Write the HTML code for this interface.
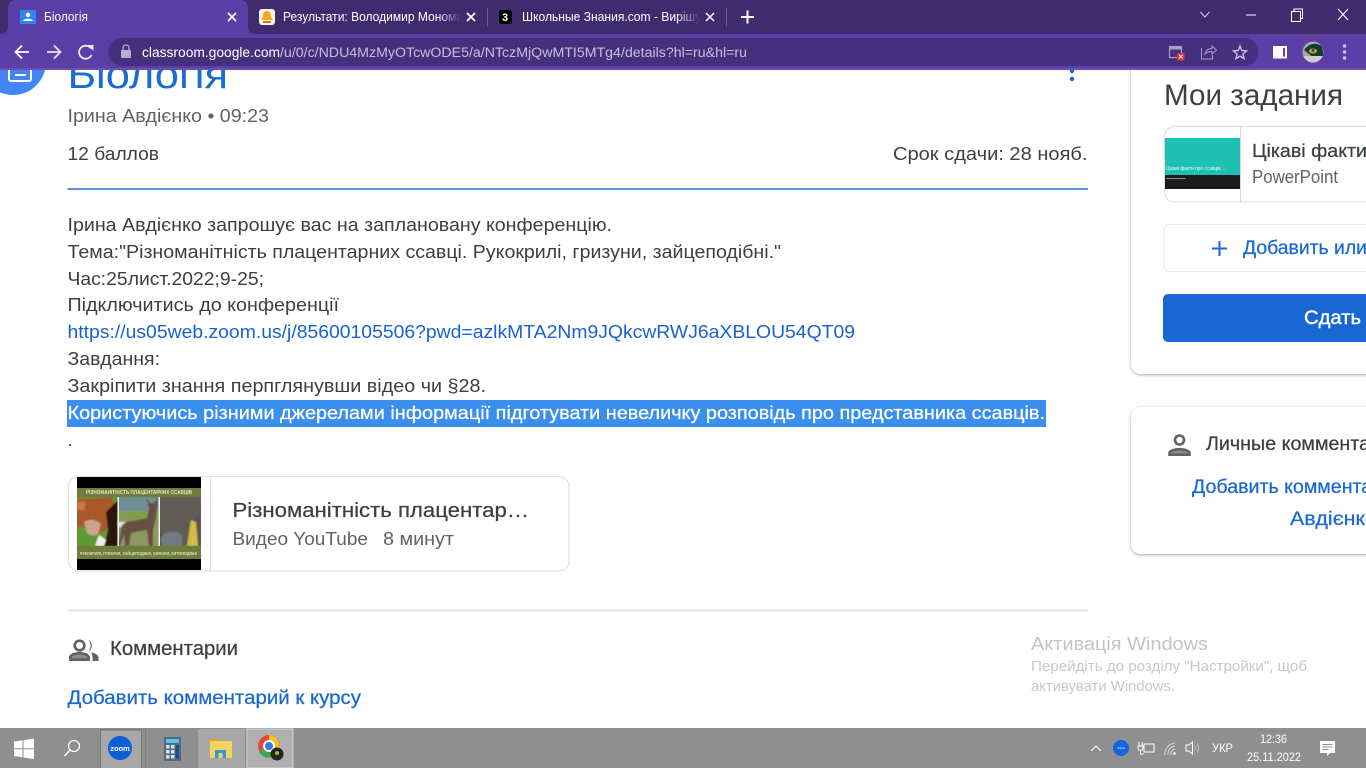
<!DOCTYPE html>
<html lang="uk"><head><meta charset="utf-8"><title>Біологія</title>
<style>
html,body{margin:0;padding:0;background:#fff;overflow:hidden;width:1366px;height:768px}
svg{display:block}
text{font-family:"Liberation Sans","Noto Sans CJK JP",sans-serif;white-space:pre}
.b{font-size:18px;fill:#3c4043}
.g{font-size:18px;fill:#5f6368}
.m{stroke-width:.25;paint-order:stroke}
</style></head><body>
<svg width="1366" height="768" viewBox="0 0 1366 768" xmlns="http://www.w3.org/2000/svg">
<defs>
<linearGradient id="f1" x1="0" x2="1"><stop offset="0" stop-color="#3e2c6e" stop-opacity="0"/><stop offset="1" stop-color="#3e2c6e"/></linearGradient>
<filter id="sh" x="-10%" y="-10%" width="120%" height="125%"><feDropShadow dx="0" dy="1" stdDeviation="1.500" flood-color="#000" flood-opacity=".35"/></filter>
<filter id="soft" x="-5%" y="-5%" width="110%" height="110%"><feGaussianBlur stdDeviation=".7"/></filter>
<clipPath id="thumb"><rect x="77" y="477" width="124" height="93"/></clipPath>
<clipPath id="pics"><rect x="77" y="497" width="124" height="49"/></clipPath>
<clipPath id="avatar"><circle cx="1313" cy="52" r="10.500"/></clipPath>
</defs>
<rect width="1366" height="768" fill="#fff"/>

<!-- page top heading, under toolbar -->
<circle cx="13" cy="62" r="33" fill="#4285f4"/>
<rect x="9" y="62" width="22" height="19" rx="2" fill="none" stroke="#fff" stroke-width="2"/>
<rect x="15" y="74" width="11" height="2" fill="#fff"/>
<text x="67.500" y="88" font-size="39" fill="#1a6ccf" textLength="160.500" lengthAdjust="spacingAndGlyphs">Біологія</text>
<circle cx="1072" cy="71" r="2.200" fill="#1967d2"/><circle cx="1072" cy="79" r="2.200" fill="#1967d2"/>

<text class="g" x="67.500" y="122" textLength="201.500" lengthAdjust="spacingAndGlyphs">Ірина Авдієнко • 09:23</text>
<text class="b" x="67.500" y="160" textLength="91.500" lengthAdjust="spacingAndGlyphs">12 баллов</text>
<text class="b" x="893" y="160" textLength="194.500" lengthAdjust="spacingAndGlyphs">Срок сдачи: 28 нояб.</text>
<rect x="67.500" y="188" width="1020.500" height="2" fill="#5c94d6"/>

<text class="b" x="67.500" y="231" textLength="544.500" lengthAdjust="spacingAndGlyphs">Ірина Авдієнко запрошує вас на заплановану конференцію.</text>
<text class="b" x="67.500" y="258" textLength="713.500" lengthAdjust="spacingAndGlyphs">Тема:"Різноманітність плацентарних ссавці. Рукокрилі, гризуни, зайцеподібні."</text>
<text class="b" x="67.500" y="285" textLength="196.500" lengthAdjust="spacingAndGlyphs">Час:25лист.2022;9-25;</text>
<text class="b" x="67.500" y="311" textLength="271.500" lengthAdjust="spacingAndGlyphs">Підключитись до конференції</text>
<text x="67.500" y="338" font-size="18" fill="#1a62d0" textLength="787.500" lengthAdjust="spacingAndGlyphs">https://us05web.zoom.us/j/85600105506?pwd=azlkMTA2Nm9JQkcwRWJ6aXBLOU54QT09</text>
<text class="b" x="67.500" y="365" textLength="92.500" lengthAdjust="spacingAndGlyphs">Завдання:</text>
<text class="b" x="67.500" y="392" textLength="418.500" lengthAdjust="spacingAndGlyphs">Закріпити знання перпглянувши відео чи §28.</text>
<rect x="67" y="400" width="979" height="27" fill="#3a8fec"/>
<text x="67.500" y="419" font-size="18" fill="#fff" stroke="#fff" class="m" textLength="977.500" lengthAdjust="spacingAndGlyphs">Користуючись різними джерелами інформації підготувати невеличку розповідь про представника ссавців.</text>
<text class="b" x="67.500" y="446">.</text>

<!-- video attachment -->
<rect x="68.500" y="476.500" width="500.500" height="94.500" rx="10" fill="#fff" stroke="#dadce0"/>
<g clip-path="url(#thumb)">
<rect x="77" y="477" width="124" height="93" fill="#000"/>
<rect x="77" y="488" width="124" height="71" fill="#6f7d3c"/>
<g clip-path="url(#pics)"><g filter="url(#soft)">
<rect x="77" y="497" width="41" height="49" fill="#5f9a35"/>
<path d="M77 499 L112 497 L116 510 L112 524 L104 532 L98 534 L88 532 L84 526 L77 528Z" fill="#a9592a"/>
<path d="M84 522 Q93 517 101 524 L98 534 Q92 537 87 533Z" fill="#c9a58c"/>
<path d="M77 502 h8 v8 h-8Z" fill="#c97a3e"/>
<path d="M106 512 L118 500 L118 546 L104 546 L108 530Z" fill="#2a130c"/>
<path d="M99 535 L106 540 L104 546 L95 546Z" fill="#eeeeea"/>
<rect x="118" y="497" width="41" height="49" fill="#8e9864"/>
<rect x="118" y="497" width="41" height="14" fill="#6f8e96"/>
<rect x="118" y="511" width="41" height="8" fill="#7ea04e"/>
<rect x="118" y="522" width="9" height="5" fill="#e8e8e0"/>
<path d="M122 525 L126 522 L147 518 L149 508 L146 498 L150 503 L154 503 L158 497 L157 506 L156 518 L153 530 L153 546 L149 546 L147 530 L131 533 L129 546 L125 546 L124 534 L120 546 L118 546Z" fill="#675040"/>
<rect x="159" y="497" width="42" height="49" fill="#5a5550"/>
<path d="M159 497 h42 v16 l-10 8 l-4 25 h-20 l-8-20Z" fill="#625c56"/>
<path d="M187 546 L191 520 L196 522 L198 546Z" fill="#d4bc4a"/>
<path d="M161 538 Q164 532 171 532 Q178 531 182 536 L182 546 L162 546Z" fill="#6f7a80"/>
</g></g>
<rect x="117.500" y="497" width="1.500" height="49" fill="#f0f0f0"/><rect x="158.500" y="497" width="1.500" height="49" fill="#f0f0f0"/>
<text x="86" y="494" font-size="5" font-weight="bold" fill="#e2e6b8" textLength="106" lengthAdjust="spacingAndGlyphs">РІЗНОМАНІТНІСТЬ ПЛАЦЕНТАРНИХ ССАВЦІВ</text>
<text x="80" y="555" font-size="4.500" font-weight="bold" fill="#dde0c0" textLength="117" lengthAdjust="spacingAndGlyphs">РУКОКРИЛІ, ГРИЗУНИ, ЗАЙЦЕПОДІБНІ, ХИЖАКИ, КИТОПОДІБНІ</text>
</g>
<line x1="210.500" y1="477" x2="210.500" y2="571" stroke="#dadce0"/>
<text x="232.500" y="517" font-size="20" fill="#3c4043" stroke="#3c4043" class="m" textLength="296.500" lengthAdjust="spacingAndGlyphs">Різноманітність плацентар…</text>
<text class="g" x="232.500" y="545" textLength="135.500" lengthAdjust="spacingAndGlyphs">Видео YouTube</text>
<text class="g" x="383" y="545" textLength="71" lengthAdjust="spacingAndGlyphs">8 минут</text>

<rect x="67.500" y="609.500" width="1020.500" height="2" fill="#e6e6e6"/>

<!-- comments -->
<g fill="none" stroke="#5f6368">
<circle cx="79.500" cy="645.500" r="4.800" stroke-width="2.700"/>
<path d="M70.300 659.700 v-2 c0-2.800 5-4.500 9.200-4.500 s9.200 1.700 9.200 4.500 v2Z" stroke-width="2.700" fill="#8a8d91"/>
<path d="M88 639.500 a6.800 6.800 0 0 1 0 12.300 a8.500 8.500 0 0 0 0-12.300Z" fill="#5f6368" stroke="none"/>
<path d="M91 652.500 c4 .5 7.500 2.300 7.500 5.300 v3.200 h-6 v-3.500 c0-2-.5-3.500-1.500-5Z" fill="#5f6368" stroke="none"/>
</g>
<text x="110" y="655" font-size="20" fill="#3c4043" stroke="#3c4043" class="m" textLength="128" lengthAdjust="spacingAndGlyphs">Комментарии</text>
<text x="67.500" y="704" font-size="19" fill="#1967d2" stroke="#1967d2" class="m" textLength="293.500" lengthAdjust="spacingAndGlyphs">Добавить комментарий к курсу</text>

<!-- right cards -->
<rect x="1131" y="40" width="300" height="334" rx="10" fill="#fff" filter="url(#sh)"/>
<text x="1164" y="105" font-size="30" fill="#3c4043" textLength="179" lengthAdjust="spacingAndGlyphs">Мои задания</text>
<rect x="1164.500" y="126.500" width="260" height="75.500" rx="10" fill="#fff" stroke="#dadce0"/>
<rect x="1165" y="138" width="75" height="37" fill="#1fc0b4"/>
<rect x="1165" y="175" width="75" height="14" fill="#1c1c1c"/>
<text x="1166" y="170" font-size="5" fill="#e8fbf9" textLength="60" lengthAdjust="spacingAndGlyphs">Цікаві факти про ссавців ...</text>
<rect x="1166" y="178" width="20" height="1" fill="#888"/>
<line x1="1240.500" y1="127" x2="1240.500" y2="202" stroke="#dadce0"/>
<text x="1252" y="157" font-size="18" fill="#3c4043" stroke="#3c4043" class="m" textLength="115" lengthAdjust="spacingAndGlyphs">Цікаві факти</text>
<text class="g" x="1252" y="183" textLength="86" lengthAdjust="spacingAndGlyphs">PowerPoint</text>
<rect x="1164" y="224.500" width="260" height="47" rx="5" fill="#fff" stroke="#e8eaed"/>
<path d="M1219.500 241 v15 M1212 248.500 h15" stroke="#1967d2" stroke-width="2" fill="none"/>
<text x="1243" y="254" font-size="19" fill="#1967d2" stroke="#1967d2" class="m" textLength="124" lengthAdjust="spacingAndGlyphs">Добавить или</text>
<rect x="1163" y="294" width="260" height="48" rx="5" fill="#1967d2"/>
<text x="1304" y="324" font-size="19" fill="#fff" stroke="#fff" stroke-width=".4" textLength="57" lengthAdjust="spacingAndGlyphs">Сдать</text>

<rect x="1131" y="407" width="300" height="147" rx="10" fill="#fff" filter="url(#sh)"/>
<g fill="none" stroke="#5f6368" stroke-width="2.600">
<circle cx="1179.500" cy="440" r="4.500"/>
<path d="M1169.500 454.700 v-1.500 c0-2.500 5.500-4 10-4 s10 1.500 10 4 v1.500Z" fill="#8a8d91"/>
</g>
<text x="1206" y="450" font-size="19" fill="#3c4043" stroke="#3c4043" class="m" textLength="197" lengthAdjust="spacingAndGlyphs">Личные комментарии</text>
<text x="1192" y="493" font-size="19" fill="#1967d2" stroke="#1967d2" class="m" textLength="213" lengthAdjust="spacingAndGlyphs">Добавить комментарий</text>
<text x="1290" y="525" font-size="19" fill="#1967d2" stroke="#1967d2" class="m" textLength="87" lengthAdjust="spacingAndGlyphs">Авдієнко</text>

<!-- watermark -->
<text x="1031" y="650" font-size="18" fill="#c4c4c4" textLength="177" lengthAdjust="spacingAndGlyphs">Активація Windows</text>
<text x="1031" y="671" font-size="14.500" fill="#c8c8c8" textLength="276" lengthAdjust="spacingAndGlyphs">Перейдіть до розділу "Настройки", щоб</text>
<text x="1031" y="691" font-size="14.500" fill="#c8c8c8" textLength="144" lengthAdjust="spacingAndGlyphs">активувати Windows.</text>

<!-- browser chrome -->
<rect x="0" y="0" width="1366" height="34" fill="#3e2c6e"/>
<rect x="0" y="34" width="1366" height="36" fill="#5b3fa6"/>
<rect x="0" y="68" width="1366" height="2" fill="#6a4fb0"/>
<path d="M0 34 C6 34 8 31 8 27 V8 C8 3 11 0 16 0 H240 C245 0 248 3 248 8 V27 C248 31 250 34 256 34Z" fill="#5b3fa6"/>
<rect x="20" y="10" width="16" height="14" rx="1" fill="#2f86ec"/>
<circle cx="28" cy="15" r="2.200" fill="#fff"/><path d="M23 21 c1-3 9-3 10 0Z" fill="#fff"/>
<text x="44" y="21" font-size="12.500" fill="#fff" textLength="44" lengthAdjust="spacingAndGlyphs">Біологія</text>
<path d="M228 13 l8 8 M236 13 l-8 8" stroke="#fff" stroke-width="1.700"/>

<rect x="259" y="9" width="16" height="16" rx="3" fill="#fdf3e2"/>
<path d="M267 11 c3 0 4 3 4 6 l2 3 h-12 l2-3 c0-3 1-6 4-6Z" fill="#f2a51f"/><rect x="263" y="21" width="8" height="2" fill="#e2711d"/>
<text x="283" y="21" font-size="12.500" fill="#fff" textLength="186" lengthAdjust="spacingAndGlyphs">Результати: Володимир Мономах</text>
<rect x="438" y="6" width="23" height="22" fill="url(#f1)"/>
<rect x="461" y="6" width="20" height="22" fill="#3e2c6e"/>
<path d="M467 13 l8 8 M475 13 l-8 8" stroke="#fff" stroke-width="1.700"/>
<rect x="487" y="8" width="1" height="19" fill="#6b5a94"/>

<rect x="499" y="10" width="13" height="14" rx="2" fill="#000"/>
<text x="502" y="21" font-size="11" fill="#fff" font-weight="bold">3</text>
<text x="522" y="21" font-size="12.500" fill="#fff" textLength="186" lengthAdjust="spacingAndGlyphs">Школьные Знания.com - Вирішуй</text>
<rect x="677" y="6" width="23" height="22" fill="url(#f1)"/>
<rect x="700" y="6" width="20" height="22" fill="#3e2c6e"/>
<path d="M706 13 l8 8 M714 13 l-8 8" stroke="#fff" stroke-width="1.500"/>
<rect x="726" y="8" width="1" height="19" fill="#6b5a94"/>
<path d="M747.500 10.500 v13 M741 17 h13" stroke="#fff" stroke-width="2"/>

<path d="M1200.500 12 l4.500 5 l4.500-5" stroke="#d8d2e8" fill="none" stroke-width="1"/>
<rect x="1246" y="14.500" width="10" height="1" fill="#fff"/>
<rect x="1291.500" y="11.500" width="9" height="10" fill="none" stroke="#fff"/>
<path d="M1294 11.500 v-2.500 h8.500 v9.500 h-2" fill="none" stroke="#fff"/>
<path d="M1338 9 l10 11 M1348 9 l-10 11" stroke="#fff" stroke-width="1.100"/>

<!-- toolbar icons -->
<g fill="none" stroke="#fff" stroke-width="1.800">
<path d="M29 52 H16 M22 45.500 L15.500 52 L22 58.500"/>
<path d="M47 52 H60 M54 45.500 L60.500 52 L54 58.500" stroke="#e8e3f4"/>
<path d="M91.500 55 A6.500 6.500 0 1 1 91 48.500" stroke="#eeeaf6"/>
</g>
<path d="M87.500 45 h6 v6Z" fill="#eeeaf6"/>
<rect x="108" y="38" width="1150" height="28" rx="14" fill="#44307c"/>
<rect x="121" y="50" width="10" height="8" rx="1" fill="#b6aed0"/>
<path d="M123 50 v-2 a3 3 0 0 1 6 0 v2" fill="none" stroke="#b6aed0" stroke-width="1.300"/>
<text x="142" y="57" font-size="13.500" fill="#fff" textLength="138" lengthAdjust="spacingAndGlyphs">classroom.google.com</text>
<text x="280" y="57" font-size="13.500" fill="#c6bfdc" textLength="467" lengthAdjust="spacingAndGlyphs">/u/0/c/NDU4MzMyOTcwODE5/a/NTczMjQwMTI5MTg4/details?hl=ru&amp;hl=ru</text>

<rect x="1169.500" y="46.500" width="12" height="11" fill="none" stroke="#a89fc6" stroke-width="1.200"/>
<rect x="1169.500" y="46.500" width="12" height="3" fill="#a89fc6"/>
<rect x="1177" y="53" width="7.500" height="7.500" rx="1" fill="#e0393a"/>
<path d="M1179 55 l3.500 3.500 M1182.500 55 l-3.500 3.500" stroke="#fff" stroke-width=".9"/>
<path d="M1201.500 48 v11 h11 v-4 M1205 54 c1-4 4-5.500 7-5.500 V46 l4.500 4 l-4.500 4 v-2.500 c-3 0-5 .5-7 2.500Z" fill="none" stroke="#a89fc6" stroke-width="1"/>
<path d="M1240 46 l1.800 4.500 l4.700 .4 l-3.600 3.100 l1.100 4.600 l-4-2.500 l-4 2.500 l1.100-4.600 l-3.600-3.100 l4.700-.4Z" fill="none" stroke="#c8c1de" stroke-width="1.400"/>
<rect x="1273" y="46" width="14" height="12.500" fill="#fff"/>
<rect x="1283" y="48" width="2" height="8.500" fill="#5b3fa6"/>
<g clip-path="url(#avatar)">
<rect x="1302" y="41" width="22" height="22" fill="#a8a8a8"/>
<path d="M1304 50 Q1312 40 1322 46 L1324 58 L1314 58Z" fill="#163a34"/>
<ellipse cx="1313" cy="51" rx="4" ry="2.500" fill="#c9a520"/>
<circle cx="1313" cy="50.500" r="1.500" fill="#1a3f90"/>
<path d="M1303 56 h20 v7 h-20Z" fill="#cfcfcf"/>
</g>
<g fill="#cfc8e2"><circle cx="1344.500" cy="46" r="1.700"/><circle cx="1344.500" cy="52" r="1.700"/><circle cx="1344.500" cy="58" r="1.700"/></g>

<!-- taskbar -->
<rect x="0" y="728" width="1366" height="40" fill="#8f8f8f"/>
<path d="M14 741.500 l8.500-1.200 v8 h-8.500Z M23.500 740.100 l10.500-1.500 v9.700 h-10.500Z M14 749.300 h8.500 v8 l-8.500-1.200Z M23.500 749.300 h10.500 v9.700 l-10.500-1.500Z" fill="#fff"/>
<circle cx="74" cy="746" r="5.500" fill="none" stroke="#fff" stroke-width="1.200"/>
<path d="M70 750 l-5.500 6" stroke="#fff" stroke-width="1.400"/>
<rect x="100" y="729" width="42" height="39" fill="#a8a8a8"/>
<rect x="100" y="729" width="42" height="1.500" fill="#787878"/><rect x="100" y="729" width="1" height="39" fill="#787878"/><rect x="141" y="729" width="1" height="39" fill="#787878"/><rect x="145" y="729" width="1" height="39" fill="#7f7f7f"/>
<circle cx="120" cy="748" r="12" fill="#0e5fd8"/>
<text x="120" y="751" font-size="7.500" fill="#fff" text-anchor="middle" font-weight="bold">zoom</text>
<rect x="164" y="737" width="17" height="24" fill="#516a80"/>
<rect x="166" y="739" width="13" height="4" fill="#5cc6ee"/>
<g fill="#d8e0e8"><rect x="166" y="745" width="3.500" height="3.500"/><rect x="171" y="745" width="3.500" height="3.500"/><rect x="166" y="750" width="3.500" height="3.500"/><rect x="171" y="750" width="3.500" height="3.500"/><rect x="166" y="755" width="3.500" height="3.500"/><rect x="171" y="755" width="3.500" height="3.500"/></g>
<rect x="175.500" y="745" width="3.500" height="13.500" fill="#1f4f86"/>
<rect x="198" y="729" width="47" height="39" fill="#a8a8a8"/>
<path d="M210 739 h9 l2 3 h10 v16 h-21Z" fill="#d9a92c"/>
<rect x="210" y="741" width="22" height="17" fill="#f6d25c"/>
<rect x="215" y="750" width="11" height="8" fill="#2f9ad8"/><rect x="218.500" y="753" width="4" height="5" fill="#f6d25c"/>
<rect x="247" y="729" width="46" height="39" fill="#b0b0b0" stroke="#d8d8d8"/>
<circle cx="269" cy="746" r="11" fill="#de4a3a"/>
<path d="M269 746 L259 752 A11 11 0 0 0 272 757Z" fill="#3ca850"/>
<path d="M269 735 A11 11 0 0 1 279 750 L269 746Z" fill="#f5c02c"/>
<circle cx="269" cy="746" r="5" fill="#2f7fe0" stroke="#fff" stroke-width="2"/>
<circle cx="277" cy="754" r="6.500" fill="#26261f"/><circle cx="277" cy="753" r="2" fill="#c8a82a"/>

<!-- tray -->
<path d="M1091 751 l5-5 l5 5" fill="none" stroke="#fff" stroke-width="1.100"/>
<circle cx="1121" cy="748" r="8" fill="#1464e0"/><rect x="1117" y="747.500" width="8" height="1.200" fill="#9fc0f5"/>
<rect x="1144" y="744" width="10" height="8" fill="none" stroke="#fff" stroke-width="1"/>
<path d="M1139 742 v4 M1142 742 v4 M1138 746 h5 v2 a2.500 2.500 0 0 1-5 0Z M1140.500 750 v4 h3" fill="none" stroke="#fff"/>
<path d="M1165 755 a11 11 0 0 1 10-12 M1168 755 a8 8 0 0 1 7-9 M1171 755 a5 5 0 0 1 4-6" fill="none" stroke="#d8d8d8" stroke-width="1"/>
<circle cx="1174.500" cy="753.500" r="1.300" fill="#fff"/>
<path d="M1186 745 h3 l3.500-3 v12 l-3.500-3 h-3Z" fill="none" stroke="#fff"/>
<path d="M1194.500 745.500 a4 4 0 0 1 0 5 M1197 743.500 a7 7 0 0 1 0 9" fill="none" stroke="#c8c8c8"/>
<text x="1212" y="752" font-size="11.500" fill="#fff" textLength="21" lengthAdjust="spacingAndGlyphs">УКР</text>
<text x="1260" y="743" font-size="11.500" fill="#fff" textLength="27" lengthAdjust="spacingAndGlyphs">12:36</text>
<text x="1247" y="761" font-size="11.500" fill="#fff" textLength="54" lengthAdjust="spacingAndGlyphs">25.11.2022</text>
<path d="M1320 741 h15 v12 h-5 l-3 3 v-3 h-7Z" fill="#fff"/>
<path d="M1322.500 744.500 h10 M1322.500 747 h10 M1322.500 749.500 h6" stroke="#8f8f8f" stroke-width="1"/>
</svg>
</body></html>
